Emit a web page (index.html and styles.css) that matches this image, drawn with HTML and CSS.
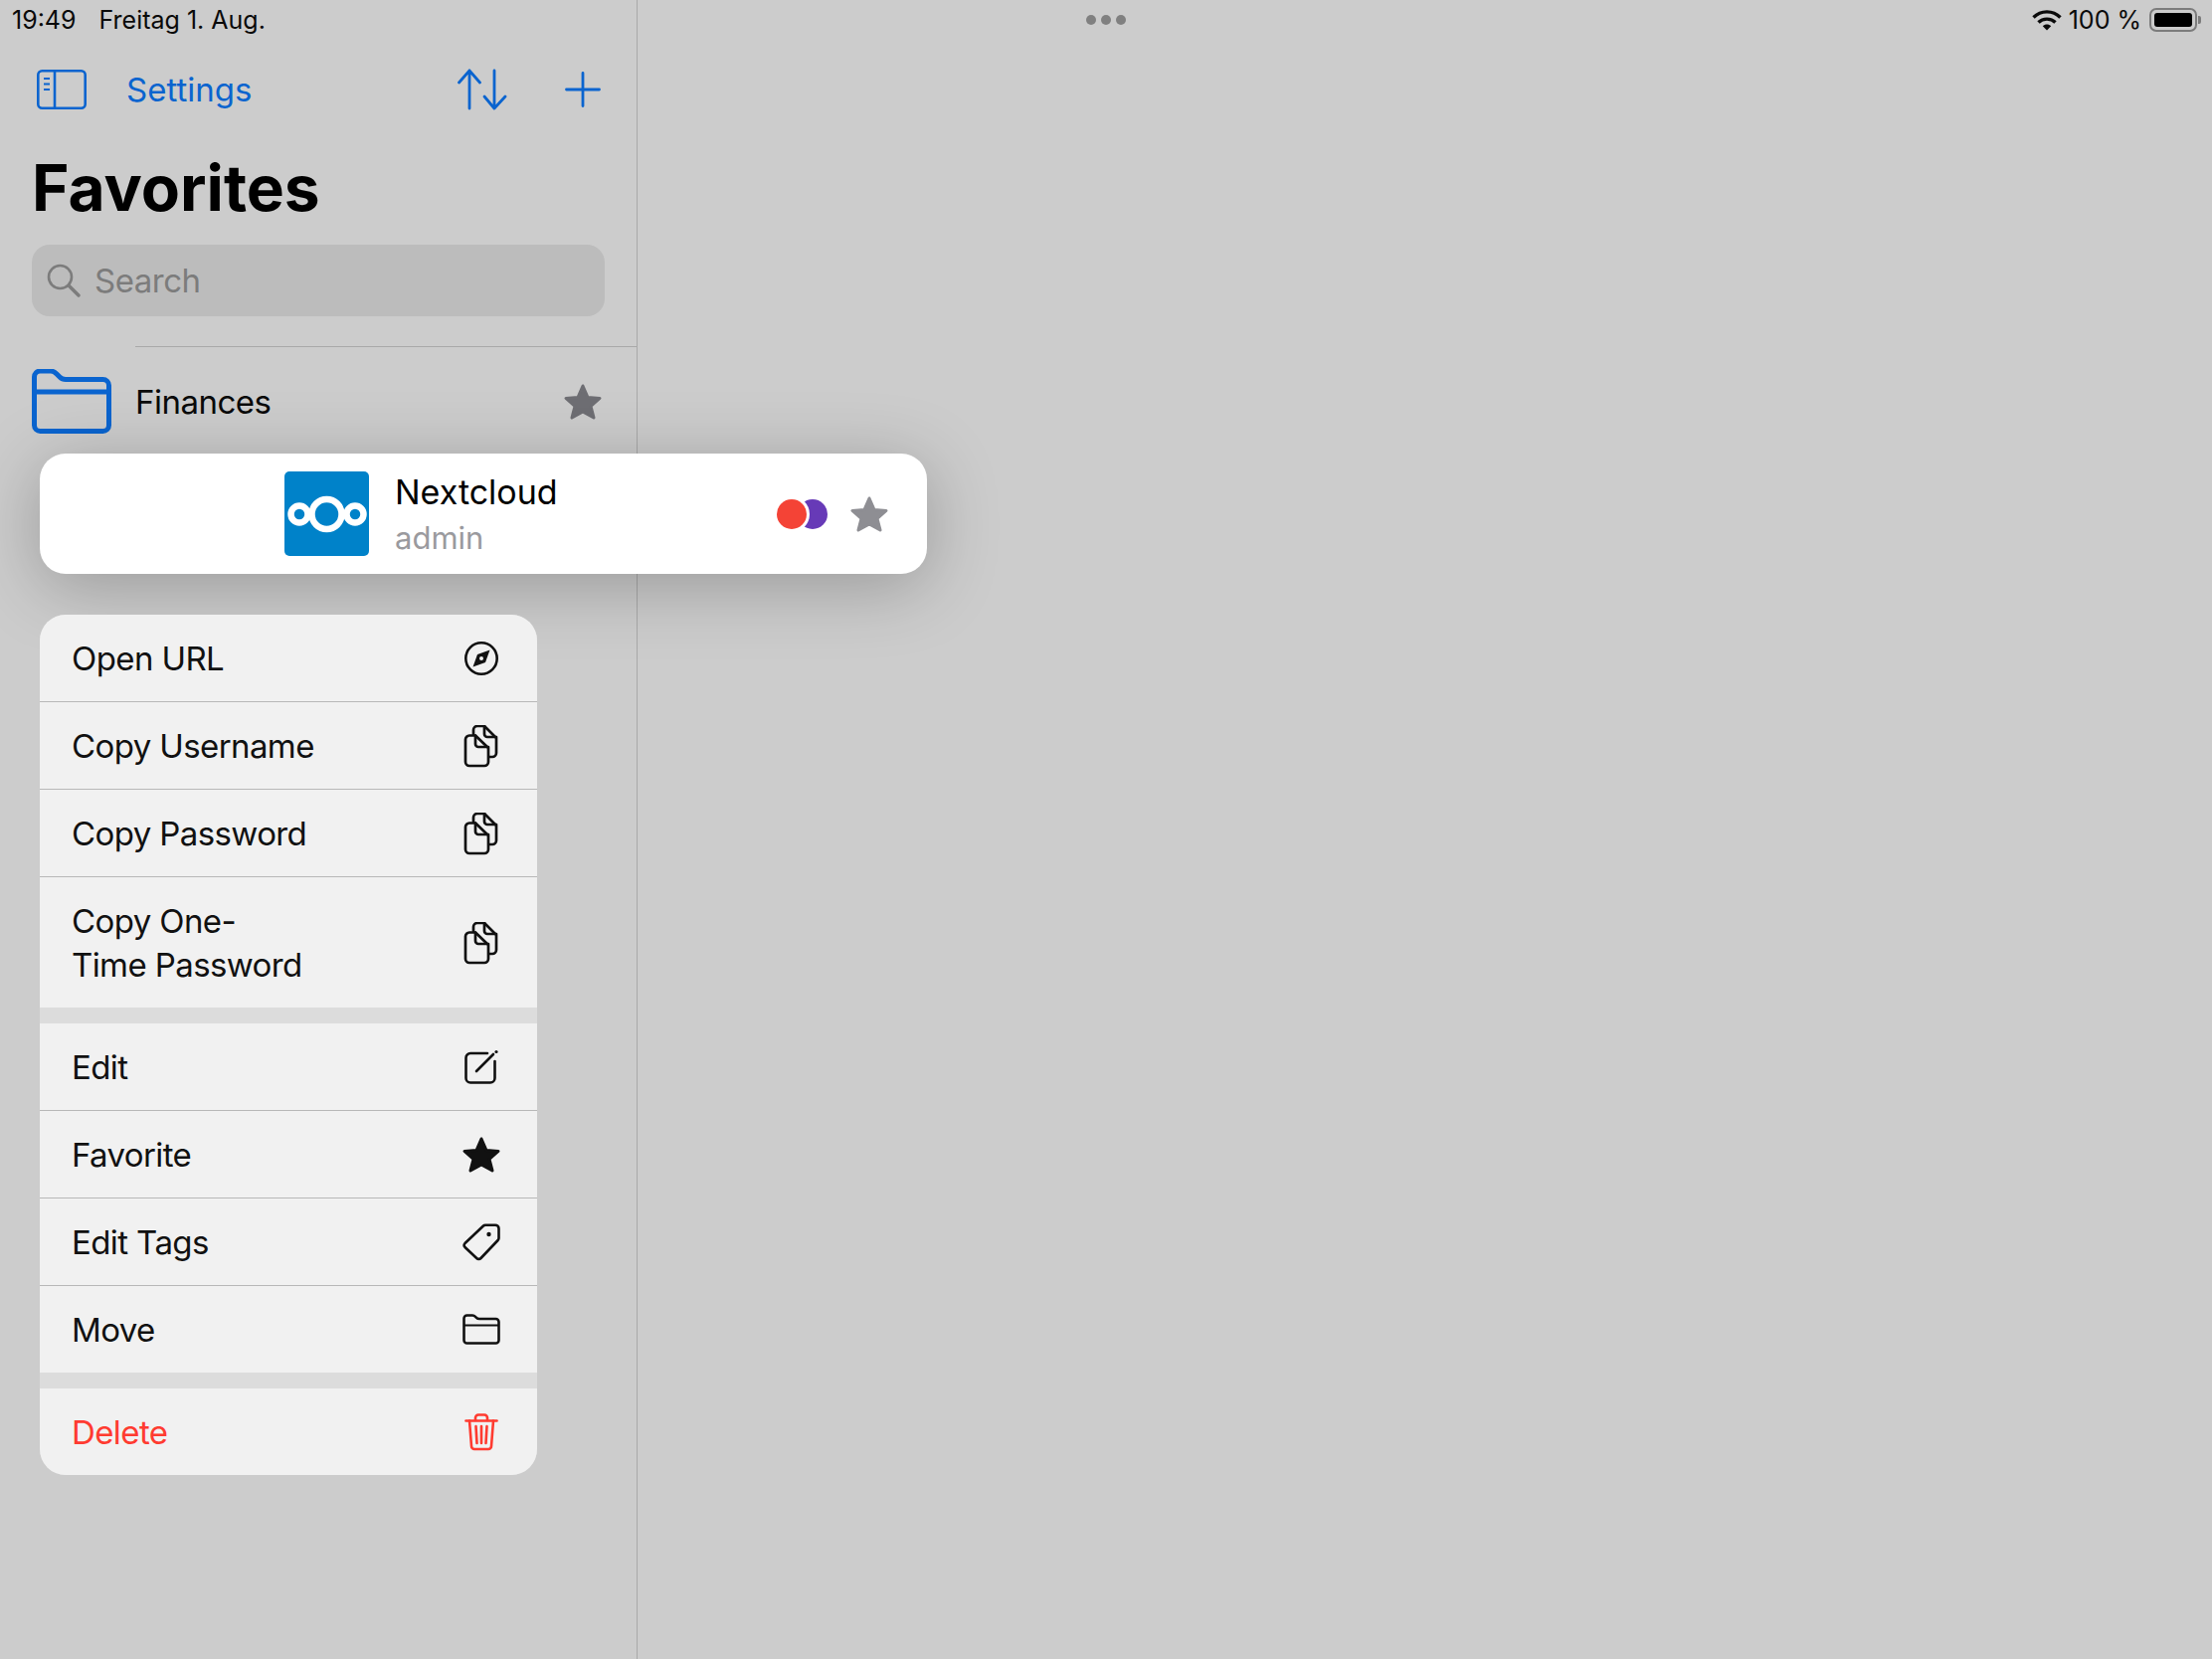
FILE: index.html
```html
<!DOCTYPE html>
<html lang="en">
<head>
<meta charset="utf-8">
<title>Favorites</title>
<link rel="stylesheet" href="styles.css">
</head>
<body>

<svg class="defs" width="0" height="0">
  <symbol id="star" viewBox="0 0 40 38">
    <polygon points="20,3 25,14.5 37,15.5 28,23.5 31,35 20,29 9,35 12,23.5 3,15.5 15,14.5" fill="currentColor" stroke="currentColor" stroke-width="3" stroke-linejoin="round"/>
  </symbol>
  <symbol id="copy" viewBox="0 0 36 44">
    <g fill="none" stroke="currentColor" stroke-width="2.700" stroke-linejoin="round" stroke-linecap="round">
      <path d="M6 10.500H12L25 23V37a4 4 0 0 1-4 4H6a4 4 0 0 1-4-4V14.500a4 4 0 0 1 4-4Z"/>
      <path d="M12 10.500V19a3 3 0 0 0 3 3H25"/>
      <path d="M10 9V5a4 4 0 0 1 4-4H21L33 13V28a4 4 0 0 1-4 4H26"/>
      <path d="M21 1V9a3 3 0 0 0 3 3H33"/>
    </g>
  </symbol>
</svg>

<div class="app">
  <aside class="sidebar">
    <div class="status-left">
      <span>19:49</span>
      <span>Freitag 1. Aug.</span>
    </div>

    <nav class="nav">
      <svg class="icon-sidebar" width="50" height="40" viewBox="0 0 50 40" fill="none" stroke="currentColor" stroke-width="2.600">
        <rect x="1.300" y="1.300" width="47.400" height="37.400" rx="4"/>
        <path d="M18 1.300V38.700"/>
        <path d="M7 9h6M7 14.500h6M7 20h6" stroke-width="2"/>
      </svg>
      <a class="nav-link">Settings</a>
      <svg class="icon-sort" width="50" height="42" viewBox="0 0 50 42" fill="none" stroke="currentColor" stroke-width="2.800" stroke-linecap="round" stroke-linejoin="round">
        <path d="M12 40V2M1.500 14 12 2l10.500 12"/>
        <path d="M37 2V40M27 28l10 12 11-12"/>
      </svg>
      <svg class="icon-plus" width="36" height="36" viewBox="0 0 36 36" stroke="currentColor" stroke-width="2.800" stroke-linecap="round">
        <path d="M18 1.500V34.500M1.500 18H34.500"/>
      </svg>
    </nav>

    <h1 class="title">Favorites</h1>

    <div class="search">
      <svg width="34" height="34" viewBox="0 0 34 34" fill="none" stroke="currentColor" stroke-width="2.600" stroke-linecap="round">
        <circle cx="13.500" cy="13.500" r="11.500"/>
        <path d="M22 22 32 32" stroke-width="3.400"/>
      </svg>
      <span>Search</span>
    </div>

    <div class="folder-row">
      <svg class="icon-folder" width="80" height="65" viewBox="0 0 80 65" fill="none" stroke="currentColor" stroke-width="5" stroke-linejoin="round">
        <path d="M2.500 8a6 6 0 0 1 6-6H19c3 0 4 1 6 3l3 3c2 2 3 2.500 6 2.500H71.500a6 6 0 0 1 6 6V56.500a6 6 0 0 1-6 6H8.500a6 6 0 0 1-6-6Z"/>
        <path d="M2.500 23H77.500"/>
      </svg>
      <span class="folder-name">Finances</span>
      <svg class="row-star" width="40" height="38"><use href="#star"/></svg>
    </div>
  </aside>

  <main class="detail">
    <div class="status-right">
      <div class="dots"><i></i><i></i><i></i></div>
      <div class="status-icons">
        <svg width="30" height="22" viewBox="0 0 30 22" fill="none" stroke="currentColor" stroke-width="3.400">
          <path d="M1.500 8.500C9 1 21 1 28.500 8.500"/>
          <path d="M6.500 13.500C11 9 19 9 23.500 13.500"/>
          <path d="M15 21.500 10.800 17.300C13 15 17 15 19.200 17.300Z" fill="currentColor" stroke="none"/>
        </svg>
        <span>100 %</span>
        <div class="battery"><div class="battery-fill"></div></div>
      </div>
    </div>
  </main>
</div>

<div class="card">
  <svg class="logo" width="85" height="85" viewBox="0 0 85 85">
    <rect width="85" height="85" rx="5" fill="#0082c9"/>
    <g fill="none" stroke="#fff">
      <circle cx="42.500" cy="43" r="15" stroke-width="6.500"/>
      <circle cx="15" cy="43" r="8.500" stroke-width="6.500"/>
      <circle cx="71" cy="43" r="8.500" stroke-width="6.500"/>
    </g>
  </svg>
  <div class="card-text">
    <div class="card-name">Nextcloud</div>
    <div class="card-user">admin</div>
  </div>
  <div class="tags">
    <i class="tag tag-purple"></i>
    <i class="tag tag-red"></i>
  </div>
  <svg class="card-star" width="40" height="38"><use href="#star"/></svg>
</div>

<div class="menu">
  <div class="menu-group">
    <div class="menu-item">
      <span>Open URL</span>
      <span class="menu-icon">
        <svg width="36" height="36" viewBox="0 0 36 36" fill="none" stroke="currentColor" stroke-width="2.600">
          <circle cx="18" cy="18" r="15.700"/>
          <path d="M26.500 9.500 22 22 9.500 26.500 14 14Z" fill="currentColor" stroke="none"/>
          <circle cx="18" cy="18" r="2" fill="#f1f1f1" stroke="none"/>
        </svg>
      </span>
    </div>
    <div class="menu-item">
      <span>Copy Username</span>
      <span class="menu-icon icon-copy"><svg width="36" height="44"><use href="#copy"/></svg></span>
    </div>
    <div class="menu-item">
      <span>Copy Password</span>
      <span class="menu-icon icon-copy"><svg width="36" height="44"><use href="#copy"/></svg></span>
    </div>
    <div class="menu-item menu-item-tall">
      <span>Copy One-<br>Time Password</span>
      <span class="menu-icon icon-copy"><svg width="36" height="44"><use href="#copy"/></svg></span>
    </div>
  </div>
  <div class="menu-group">
    <div class="menu-item">
      <span>Edit</span>
      <span class="menu-icon">
        <svg width="36" height="36" viewBox="0 0 36 36" fill="none" stroke="currentColor" stroke-width="2.600" stroke-linecap="round">
          <path d="M24 4H7a4.500 4.500 0 0 0-4.500 4.500V29A4.500 4.500 0 0 0 7 33.500H27A4.500 4.500 0 0 0 31.500 29V12"/>
          <path d="M13 22 30 5"/>
          <circle cx="33" cy="2.500" r="1.600" fill="currentColor" stroke="none"/>
        </svg>
      </span>
    </div>
    <div class="menu-item">
      <span>Favorite</span>
      <span class="menu-icon"><svg width="40" height="38"><use href="#star"/></svg></span>
    </div>
    <div class="menu-item">
      <span>Edit Tags</span>
      <span class="menu-icon">
        <svg width="38" height="38" viewBox="0 0 38 38" fill="none" stroke="currentColor" stroke-width="2.600" stroke-linejoin="round">
          <path d="M2.500 20 21 2.500a3 3 0 0 1 2-.8H33a3.500 3.500 0 0 1 3.500 3.500V15a3 3 0 0 1-.9 2L18.500 35a3 3 0 0 1-4.300 0L2.500 24a3 3 0 0 1 0-4Z"/>
          <circle cx="26.500" cy="11" r="2.200" fill="currentColor" stroke="none"/>
        </svg>
      </span>
    </div>
    <div class="menu-item">
      <span>Move</span>
      <span class="menu-icon">
        <svg width="38" height="31" viewBox="0 0 38 31" fill="none" stroke="currentColor" stroke-width="2.600" stroke-linejoin="round">
          <path d="M1.500 4.500a3 3 0 0 1 3-3H10c1.500 0 2.200.5 3 1.300l1 1c.8.800 1.500 1.200 3 1.200H33.500a3 3 0 0 1 3 3V26.500a3 3 0 0 1-3 3H4.500a3 3 0 0 1-3-3Z"/>
          <path d="M1.500 11.500H36.500" stroke-width="1.800"/>
        </svg>
      </span>
    </div>
  </div>
  <div class="menu-group">
    <div class="menu-item menu-item-danger">
      <span>Delete</span>
      <span class="menu-icon">
        <svg width="34" height="38" viewBox="0 0 34 38" fill="none" stroke="currentColor" stroke-width="2.600" stroke-linecap="round" stroke-linejoin="round">
          <path d="M1.500 7.500H32.500"/>
          <path d="M11 7V4.500a3 3 0 0 1 3-3H20a3 3 0 0 1 3 3V7"/>
          <path d="M5 7.500 7 33a3 3 0 0 0 3 3H24a3 3 0 0 0 3-3L29 7.500"/>
          <path d="M11.500 13 12.500 30M17 13V30M22.500 13 21.500 30"/>
        </svg>
      </span>
    </div>
  </div>
</div>

</body>
</html>
```

FILE: styles.css
```css
* {
  box-sizing: border-box;
}

html, body {
  height: 100%;
}

body {
  margin: 0;
  background-color: #cccccc;
  color: #0a0a0a;
  font-family: Inter, "Noto Sans", sans-serif;
  overflow: hidden;
}

.defs {
  position: absolute;
}

.app {
  display: flex;
  height: 1668px;
}

.sidebar {
  width: 641px;
  border-right: 1px solid #a9a9a9;
}

.detail {
  flex: 1;
}

/* status bar */
.status-left {
  display: flex;
  gap: 23px;
  height: 40px;
  padding: 6px 0 0 12px;
  font-size: 25px;
  line-height: 28px;
}

.status-right {
  display: flex;
  justify-content: space-between;
  align-items: center;
  height: 40px;
  padding: 0 10px 0 451px;
  font-size: 25px;
}

.dots {
  display: flex;
  gap: 5px;
}

.dots i {
  width: 10px;
  height: 10px;
  border-radius: 50%;
  background-color: #808080;
}

.status-icons {
  display: flex;
  align-items: center;
  gap: 7px;
}

.battery {
  position: relative;
  width: 48px;
  height: 24px;
  padding: 3px;
  margin-left: 1px;
  margin-right: 5px;
  border: 2px solid #7c7c7c;
  border-radius: 7px;
}

.battery::after {
  content: "";
  position: absolute;
  right: -6px;
  top: 6px;
  width: 3px;
  height: 8px;
  background-color: #7c7c7c;
  border-radius: 0 2px 2px 0;
}

.battery-fill {
  height: 100%;
  background-color: #000;
  border-radius: 3px;
}

/* nav bar */
.nav {
  display: flex;
  align-items: center;
  height: 40px;
  margin-top: 30px;
  padding-left: 37px;
  color: #0a64cf;
}

.nav-link {
  margin-left: 40px;
  font-size: 33px;
}

.icon-sort {
  margin-left: auto;
}

.icon-plus {
  margin-left: 58px;
  margin-right: 36px;
}

.title {
  margin: 39px 0 0 32px;
  font-size: 64px;
  line-height: 80px;
  font-weight: 700;
  color: #000;
}

.search {
  display: flex;
  align-items: center;
  gap: 14px;
  width: 576px;
  height: 72px;
  margin: 17px 0 0 32px;
  padding-left: 15px;
  background-color: #bcbcbc;
  border-radius: 18px;
  color: #7c7c7c;
  font-size: 33px;
  letter-spacing: -0.5px;
}

.folder-row {
  display: flex;
  align-items: center;
  height: 108px;
  margin-top: 30px;
  margin-left: 32px;
  position: relative;
  font-size: 33px;
  letter-spacing: -0.5px;
}

.folder-row::before {
  content: "";
  position: absolute;
  top: 0;
  left: 104px;
  right: 0;
  height: 1px;
  background-color: #a9a9a9;
}

.icon-folder {
  color: #0a64cf;
  margin-top: 2px;
}

.folder-name {
  margin-left: 24px;
  margin-top: 4px;
}

.row-star {
  margin-left: auto;
  margin-right: 34px;
  margin-top: 4px;
  color: #6e6e73;
}

/* preview card */
.card {
  position: absolute;
  left: 40px;
  top: 456px;
  display: flex;
  align-items: center;
  width: 892px;
  height: 121px;
  padding-left: 246px;
  padding-right: 38px;
  background-color: #fff;
  border-radius: 26px;
  box-shadow: 0 12px 70px rgba(0, 0, 0, 0.25);
}

.logo {
  flex-shrink: 0;
}

.card-text {
  margin-left: 26px;
  padding-top: 2px;
}

.card-name {
  font-size: 34px;
  line-height: 46px;
  color: #000;
}

.card-user {
  font-size: 31px;
  line-height: 46px;
  color: #9a9a9e;
}

.tags {
  position: relative;
  width: 52px;
  height: 30px;
  margin-left: auto;
  margin-right: 21px;
}

.tag {
  position: absolute;
  top: 0;
  width: 30px;
  height: 30px;
  border-radius: 50%;
}

.tag-purple {
  left: 21px;
  background-color: #673ab7;
}

.tag-red {
  left: 0;
  background-color: #f44336;
  box-shadow: 0 0 0 3px #fff;
}

.card-star {
  color: #8e8e93;
}

/* context menu */
.menu {
  position: absolute;
  left: 40px;
  top: 618px;
  display: flex;
  flex-direction: column;
  gap: 16px;
  width: 500px;
  background-color: #dcdcdc;
  border-radius: 26px;
  overflow: hidden;
}

.menu-item {
  display: flex;
  justify-content: space-between;
  align-items: center;
  height: 88px;
  padding-left: 32px;
  padding-right: 36px;
  background-color: #f1f1f1;
  border-bottom: 1px solid #b8b8b8;
  font-size: 33px;
  letter-spacing: -0.6px;
  line-height: 44px;
  color: #111;
}

.menu-group .menu-item:last-child {
  height: 87px;
  border-bottom: 0;
}

.menu-group .menu-item-tall:last-child {
  height: 131px;
}

.menu-icon {
  display: flex;
  justify-content: center;
  width: 40px;
}

.icon-copy {
  padding-top: 2px;
}

.menu-item-danger {
  color: #ff3b30;
}
```
